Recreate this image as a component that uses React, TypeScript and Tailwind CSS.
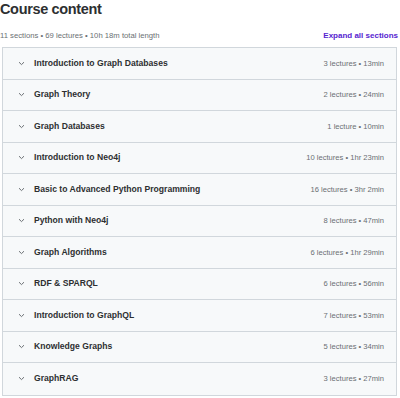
const sections = [
  { title: "Introduction to Graph Databases", meta: "3 lectures • 13min" },
  { title: "Graph Theory", meta: "2 lectures • 24min" },
  { title: "Graph Databases", meta: "1 lecture • 10min" },
  { title: "Introduction to Neo4j", meta: "10 lectures • 1hr 23min" },
  { title: "Basic to Advanced Python Programming", meta: "16 lectures • 3hr 2min" },
  { title: "Python with Neo4j", meta: "8 lectures • 47min" },
  { title: "Graph Algorithms", meta: "6 lectures • 1hr 29min" },
  { title: "RDF & SPARQL", meta: "6 lectures • 56min" },
  { title: "Introduction to GraphQL", meta: "7 lectures • 53min" },
  { title: "Knowledge Graphs", meta: "5 lectures • 34min" },
  { title: "GraphRAG", meta: "3 lectures • 27min" },
];

function Chevron() {
  return (
    <svg width="7" height="5" viewBox="0 0 7 5" className="shrink-0">
      <path d="M1 1.2 L3.5 3.6 L6 1.2" fill="none" stroke="#6a6f73" strokeWidth="1" />
    </svg>
  );
}

export default function App() {
  return (
    <div className="w-[400px] h-[398px] bg-white overflow-hidden font-['Liberation_Sans',Arial,sans-serif] text-[#2d2f31]">
      <h2 className="text-[14.5px] leading-[18px] font-bold tracking-[-0.35px]">Course content</h2>
      <div className="flex items-end justify-between mt-[12px] pr-[2px]">
        <span className="text-[7.7px] text-[#6a6f73]">11 sections • 69 lectures • 10h 18m total length</span>
        <span className="text-[8px] font-bold text-[#5624d0]">Expand all sections</span>
      </div>
      <div className="mt-[5px] ml-[2px] mr-[3px] border border-[#d1d7dc]">
        {sections.map((s, i) => (
          <div
            key={s.title}
            className={`flex items-center h-[31.5px] bg-[#f7f9fa] pl-[15px] pr-[12px] ${i < sections.length - 1 ? "border-b border-[#d1d7dc]" : ""}`}
          >
            <Chevron />
            <span className="ml-[9px] text-[8.6px] font-bold flex-1">{s.title}</span>
            <span className="text-[7.6px] text-[#6a6f73]">{s.meta}</span>
          </div>
        ))}
      </div>
    </div>
  );
}
